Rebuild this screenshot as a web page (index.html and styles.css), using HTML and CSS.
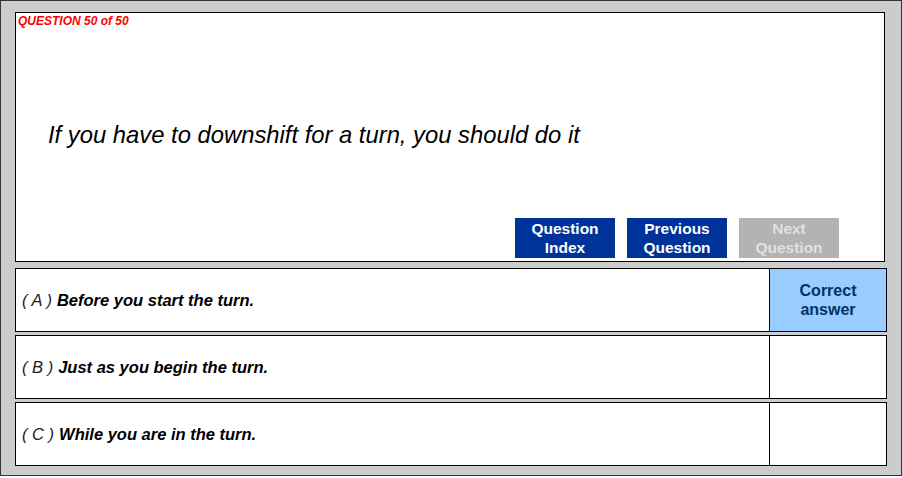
FILE: index.html
```html
<!DOCTYPE html>
<html lang="en">
<head>
    <meta charset="UTF-8">
    <title>Question 50 of 50</title>
    <link rel="stylesheet" href="styles.css">
</head>
<body>
    <div class="frame">
        <!-- Question panel -->
        <div class="question-box">
            <div class="q-num">QUESTION 50 of 50</div>
            <p class="q-text">If you have to downshift for a turn, you should do it</p>
            <div class="nav">
                <button class="nav-btn">Question<br>Index</button>
                <button class="nav-btn">Previous<br>Question</button>
                <button class="nav-btn disabled">Next<br>Question</button>
            </div>
        </div>

        <!-- Answers -->
        <div class="answer">
            <div class="answer-text"><span class="letter">( A )</span> Before you start the turn.</div>
            <div class="answer-mark correct">Correct<br>answer</div>
        </div>
        <div class="answer">
            <div class="answer-text"><span class="letter">( B )</span> Just as you begin the turn.</div>
            <div class="answer-mark"></div>
        </div>
        <div class="answer">
            <div class="answer-text"><span class="letter">( C )</span> While you are in the turn.</div>
            <div class="answer-mark"></div>
        </div>
    </div>
</body>
</html>
```

FILE: styles.css
```css
* {
    margin: 0;
    padding: 0;
    box-sizing: border-box;
}

body {
    background: #ffffff;
    font-family: 'Liberation Sans', Arial, sans-serif;
    color: #000;
}

.frame {
    width: 902px;
    height: 476px;
    background: #cccccc;
    border: 1px solid #333;
    padding: 11px 14px 0 14px;
}

.question-box {
    height: 250px;
    margin-right: 2px;
    background: #fff;
    border: 1px solid #000;
    display: flex;
    flex-direction: column;
}

.q-num {
    color: #ff0000;
    font-size: 12px;
    font-weight: bold;
    font-style: italic;
    line-height: 14px;
    padding: 1px 0 0 2px;
}

.q-text {
    flex: 1;
    display: flex;
    align-items: center;
    padding: 24px 0 0 32px;
    font-size: 23.8px;
    font-style: italic;
}

.nav {
    display: flex;
    justify-content: flex-end;
    gap: 12px;
    padding: 0 45px 3px 0;
}

.nav-btn {
    width: 100px;
    height: 40px;
    border: none;
    background: #003399;
    color: #fff;
    font-family: inherit;
    font-size: 15.5px;
    font-weight: bold;
    line-height: 19px;
}

.nav-btn.disabled {
    background: #b3b3b3;
    color: #e0e0e0;
}

.answer {
    height: 64px;
    margin-bottom: 3px;
    background: #fff;
    border: 1px solid #000;
    display: flex;
}

.question-box + .answer {
    margin-top: 6px;
}

.answer-text {
    flex: 1;
    display: flex;
    align-items: center;
    gap: 5px;
    padding-left: 6px;
    font-size: 16.5px;
    font-weight: bold;
    font-style: italic;
}

.letter {
    font-weight: normal;
    color: #222;
}

.answer-mark {
    width: 117px;
    border-left: 1px solid #000;
    display: flex;
    align-items: center;
    justify-content: center;
    text-align: center;
    font-size: 16px;
    font-weight: bold;
    line-height: 19px;
    color: #003366;
}

.answer-mark.correct {
    background: #99ccff;
}
```
